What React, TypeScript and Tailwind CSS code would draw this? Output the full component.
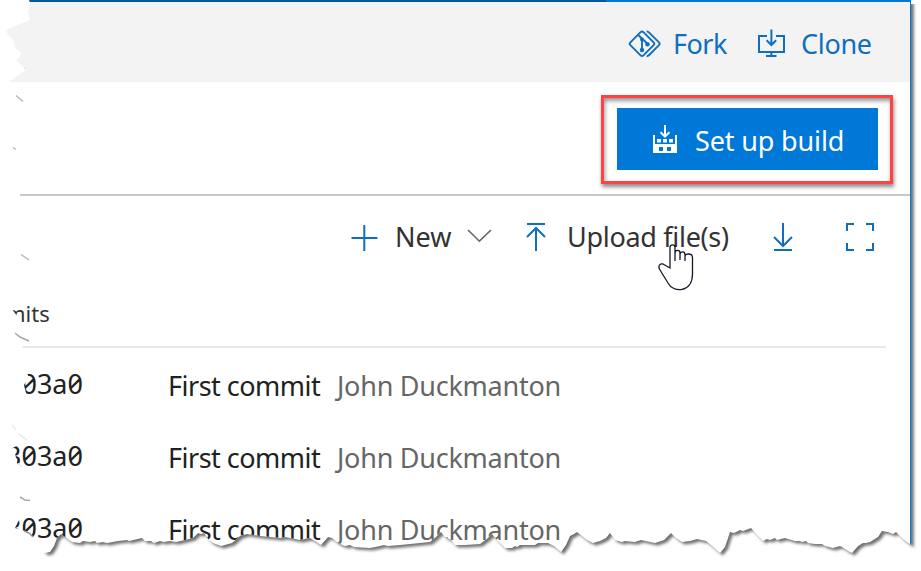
import type { ReactNode } from "react";

const PAPER =
  "29,0 30,3 28,12 30,20 20,24 6,30 8,35 14,41 15,48 21,52 20,57 16,60 22,66 26,70 20,74 10,81 10,90 15,94 24,102 19,110 12,125 11,140 12,147 16,150 14,170 18,190 20,193 20,200 26,211 18,235 20,253 29,260 14,290 12,309 17,316 18,324 15,325 15,332 28,341 22,347 26,372 29,377 24,385 26,393 11,423 27,440 11,449 15,453 17,463 23,468 19,495 30,500 18,522 15,528 25,531 33,537 39,545 45,553 50,552 54,546 57,538 61,534 65,537 72,542 80,543 83,541 90,542 95,541 97,543 103,542 107,543 118,541 127,540 129,541 142,538 145,541 151,541 154,543 160,541 164,542 170,541 176,542 185,540 193,538 198,533 201,534 204,533 209,540 213,543 221,546 232,543 240,536 247,534 260,536 280,538 285,537 300,540 310,538 315,541 321,545 328,537 332,538 338,543 345,546 350,545 354,547 370,548 380,546 384,545 388,546 400,545 420,543 430,542 436,537 441,532 445,537 451,540 455,545 465,545 480,544 488,538 492,534 497,540 505,548 512,548 515,546 517,547 520,545 535,545 538,543 548,543 554,546 561,552 566,545 570,536 574,534 577,532 587,540 593,543 600,541 606,538 610,533 615,540 622,542 625,541 635,542 641,540 655,543 664,540 671,533 676,538 682,542 690,541 697,539 706,541 712,546 720,553 725,547 730,532 734,533 740,530 743,531 751,528 757,535 763,541 767,539 770,540 775,538 777,540 785,538 795,541 800,541 802,542 806,541 808,543 815,544 822,544 825,546 833,548 840,546 842,547 848,551 852,553 858,546 863,543 866,543 870,542 878,537 882,531 888,532 893,534 896,532 903,539 911,545 911,0";

function TornPaper() {
  return (
    <svg className="pointer-events-none absolute inset-0" width="921" height="571" viewBox="0 0 921 571">
      <defs>
        <clipPath id="outside">
          <path clipRule="evenodd" d={`M0,0H921V571H0Z M${PAPER}Z`} />
        </clipPath>
        <clipPath id="lower-right">
          <path d="M44 500H905V0H921V571H44Z" />
        </clipPath>
        <filter id="soft" x="-5%" y="-5%" width="110%" height="110%">
          <feGaussianBlur stdDeviation="1.6" />
        </filter>
      </defs>
      <g clipPath="url(#outside)">
        <rect width="921" height="571" fill="#fff" />
        <g clipPath="url(#lower-right)">
          <polygon points={PAPER} transform="translate(2.8 2.6)" fill="#707070" filter="url(#soft)" />
          <rect x="911" width="10" height="4" fill="#fff" />
        </g>
      </g>
      <g fill="none" stroke="#b8b8b8" strokeWidth="1.5">
        <path d="M16 95.5L23 101.5M13 147.5L16 149.5M21 254.5L29 260" />
        <path d="M15 333L20 337L29 341M20 497L25 500L30 500.5" stroke="#a8a8a8" />
        <path d="M24 68L26 69M12 425L16 430M19 434L27 440M18 463L22 467" stroke="#dcdcdc" strokeWidth="1" />
        <path d="M24 531L29 533L33 537" stroke="#999" />
      </g>
    </svg>
  );
}

function ForkIcon() {
  return (
    <svg className="h-[30px] w-[34px] shrink-0" viewBox="0 0 34 30" fill="none" stroke="#106ebe" strokeWidth="1.9">
      <path d="M12.6 3.2Q14 1.8 15.4 3.2L25.6 13.4Q27 14.8 25.6 16.2L15.4 26.4Q14 27.8 12.6 26.4L2.4 16.2Q1 14.8 2.4 13.4Z" />
      <path d="M18.6 2.4C20 2.4 20.5 3 21.2 3.7L31 13.4Q32.4 14.8 31 16.2L21.2 26C20.5 26.7 20 27.2 18.6 27.2" />
      <path d="M10.5 6.2L20 15.3M14 10V21" />
      <g fill="#106ebe" stroke="none"><circle cx="14" cy="10.5" r="2" /><circle cx="14" cy="21" r="2.2" /><circle cx="19.5" cy="15.2" r="2.2" /></g>
    </svg>
  );
}

function CloneIcon() {
  return (
    <svg className="h-[30px] w-[28px] shrink-0" viewBox="0 0 28 30" fill="none" stroke="#106ebe" strokeWidth="2">
      <path d="M10 7H2V23H27V7H19M14.4 0.5V16M9.6 11.3L14.4 16L19.2 11.3M14.4 23V27M9 27H19.5" />
    </svg>
  );
}

function BuildIcon() {
  return (
    <svg className="h-[30px] w-[26px] shrink-0" viewBox="0 0 26 30">
      <path d="M13 1V12.5M8.6 8.3L13 12.7L17.4 8.3" fill="none" stroke="#fff" strokeWidth="2" />
      <path fill="#fff" fillRule="evenodd" d="M1 11H3V20H23V11H25V29H1ZM7 23V27H11V23ZM15 23V27H19V23Z" />
      <path fill="#fff" d="M5 15H9V18.6H5ZM11 15H15V18.6H11ZM17 15H21V18.6H17Z" />
    </svg>
  );
}

function Label({ className, children }: { className: string; children: ReactNode }) {
  return <span className={`shrink-0 whitespace-nowrap ${className}`}>{children}</span>;
}

function CommitRow() {
  return (
    <div className="flex h-[72px] items-center pl-[6px] pt-[2px] text-[27px] leading-none">
      <Label className="w-[162px] pb-[4px] text-[#212121] [font-feature-settings:'zero'_1]">303a0</Label>
      <Label className="w-[169px] tracking-[-0.5px] text-[#212121]">First commit</Label>
      <Label className="tracking-[-0.25px] text-[#666]">John Duckmanton</Label>
    </div>
  );
}

export default function App() {
  return (
    <div className="relative h-[571px] w-[921px] overflow-hidden bg-white font-['Noto_Sans','Open_Sans',sans-serif]">
      <div className="flex h-[571px] w-[911px] flex-col border-r border-[#0078d7]">
        <div className="flex h-[2px] shrink-0">
          <div className="w-[606px] bg-[#005a9e]" />
          <div className="flex-1 bg-[#0078d7]" />
        </div>
        <header className="flex h-20 shrink-0 items-center bg-[#f3f3f3] pl-[628px] pt-1 text-[27px] leading-none text-[#106ebe]">
          <ForkIcon />
          <Label className="ml-[11px] w-[84px] pb-[2px] tracking-[-0.5px]">Fork</Label>
          <CloneIcon />
          <Label className="ml-[16px] pb-[2px] tracking-[-0.3px]">Clone</Label>
        </header>
        <div className="h-[114px] shrink-0 border-b-2 border-[#c8c8c8] pl-[601px] pt-[13px]">
          <div className="h-[89px] w-[292px] border-3 border-[#ff4343] p-[10px] pl-[13px] shadow-[1px_3px_4px_rgba(0,0,0,0.45),inset_1px_3px_4px_rgba(0,0,0,0.4)]">
            <button className="flex h-[62px] w-[261px] items-center bg-[#0078d7] pl-[35px] text-[27px] leading-none text-white">
              <BuildIcon />
              <Label className="ml-[17px] pt-[2px] tracking-[-0.15px]">Set up build</Label>
            </button>
          </div>
        </div>
        <div className="flex h-[84px] shrink-0 items-center pl-[351px] text-[27px] leading-none text-[#333]">
          <svg className="h-7 w-[27px] shrink-0" viewBox="0 0 27 28" stroke="#106ebe" strokeWidth="2"><path d="M0.5 14H26.5M13.3 1V27" /></svg>
          <Label className="ml-[17px] w-[72px] pb-[4px]">New</Label>
          <svg className="h-7 w-[25px] shrink-0" viewBox="0 0 25 28" fill="none" stroke="#666" strokeWidth="1.6"><path d="M1 6L12.4 17.2L24 6" /></svg>
          <svg className="ml-[34px] h-[30px] w-5 shrink-0" viewBox="0 0 20 30" fill="none" stroke="#106ebe" strokeWidth="2"><path d="M1 1H19M10 28V5M1 14L10 5L19 14" /></svg>
          <Label className="ml-[21px] w-[206px] pb-[4px] tracking-[-0.3px]">Upload file(s)</Label>
          <svg className="h-[30px] w-5 shrink-0" viewBox="0 0 20 30" fill="none" stroke="#106ebe" strokeWidth="2"><path d="M1 27H19M10 0V23M1 14L10 23L19 14" /></svg>
          <svg className="ml-[53px] h-[30px] w-7 shrink-0" viewBox="0 0 28 30" fill="none" stroke="#106ebe" strokeWidth="2"><path d="M1 8V1H8M20 1H27V8M27 20V27H20M8 27H1V20" /></svg>
        </div>
        <div className="ml-[22px] mr-6 flex h-[68px] shrink-0 items-end border-b-2 border-[#eaeaea] pb-[22px] text-[22px] leading-none text-[#333]">
          <Label className="-ml-[17px]">mits</Label>
        </div>
        <CommitRow />
        <CommitRow />
        <CommitRow />
      </div>
      <svg className="absolute left-[658px] top-[243px]" width="36" height="48" viewBox="0 0 36 48">
        <path d="M12 25V4.5C12 1 17 1 17 4.5V18V10C17 6.4 22 6.4 22 10V17V11.5C22 8 27 8 27 11.5V18V13.5C27 10 34.5 10 34.5 14.5V31C34.5 50 15 50 10 40L2 27C0 24 1 20 5 21L12 25Z" fill="#fff" stroke="#171728" strokeWidth="1.3" />
      </svg>
      <TornPaper />
    </div>
  );
}
